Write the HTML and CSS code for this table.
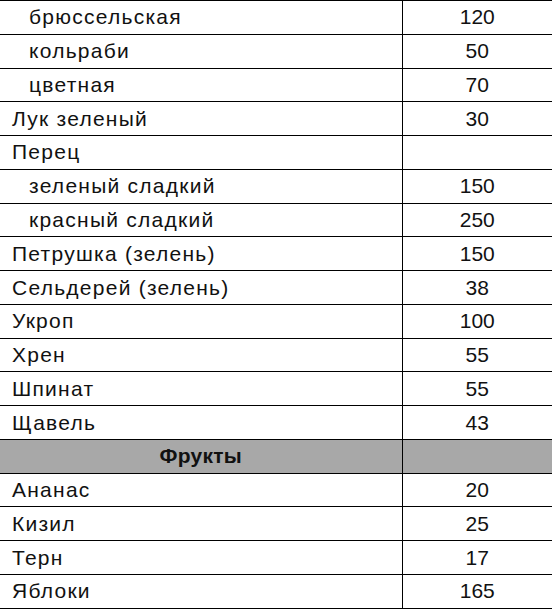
FILE: index.html
```html
<!DOCTYPE html>
<html lang="ru">
<head>
<meta charset="utf-8">
<link rel="stylesheet" href="styles.css">
</head>
<body>
<table class="tbl">
<colgroup><col class="c-name"><col class="c-val"></colgroup>
<tbody>
<tr><td class="name sub">брюссельская</td><td class="val">120</td></tr>
<tr><td class="name sub">кольраби</td><td class="val">50</td></tr>
<tr><td class="name sub">цветная</td><td class="val">70</td></tr>
<tr><td class="name">Лук зеленый</td><td class="val">30</td></tr>
<tr><td class="name">Перец</td><td class="val"></td></tr>
<tr><td class="name sub">зеленый сладкий</td><td class="val">150</td></tr>
<tr><td class="name sub">красный сладкий</td><td class="val">250</td></tr>
<tr><td class="name">Петрушка (зелень)</td><td class="val">150</td></tr>
<tr><td class="name">Сельдерей (зелень)</td><td class="val">38</td></tr>
<tr><td class="name">Укроп</td><td class="val">100</td></tr>
<tr><td class="name">Хрен</td><td class="val">55</td></tr>
<tr><td class="name">Шпинат</td><td class="val">55</td></tr>
<tr><td class="name">Щавель</td><td class="val">43</td></tr>
<tr class="group"><td class="name head">Фрукты</td><td class="val"></td></tr>
<tr><td class="name">Ананас</td><td class="val">20</td></tr>
<tr><td class="name">Кизил</td><td class="val">25</td></tr>
<tr><td class="name">Терн</td><td class="val">17</td></tr>
<tr><td class="name">Яблоки</td><td class="val">165</td></tr>
</tbody>
</table>
</body>
</html>
```
FILE: styles.css
```css
html, body {
  margin: 0;
  padding: 0;
  background: #fff;
}
.tbl {
  width: 552px;
  table-layout: fixed;
  border-collapse: collapse;
  font-family: "Liberation Sans", Arial, sans-serif;
  font-size: 21px;
  color: #111;
}
.c-name {
  width: 402px;
}
.c-val {
  width: 150px;
}
.tbl td {
  height: 32.78px;
  padding: 0;
  border-top: 1px solid #000;
  border-bottom: 1px solid #000;
  vertical-align: middle;
  line-height: 22px;
  white-space: nowrap;
}
.tbl td.name {
  padding-left: 12px;
  border-right: 1px solid #000;
  letter-spacing: 1.25px;
}
.tbl td.sub {
  padding-left: 29px;
}
.tbl td.val {
  text-align: center;
}
.tbl tr.group td {
  background: #a8a8a8;
}
.tbl td.head {
  padding-left: 0;
  text-align: center;
  font-weight: bold;
  letter-spacing: 0.3px;
}
```
